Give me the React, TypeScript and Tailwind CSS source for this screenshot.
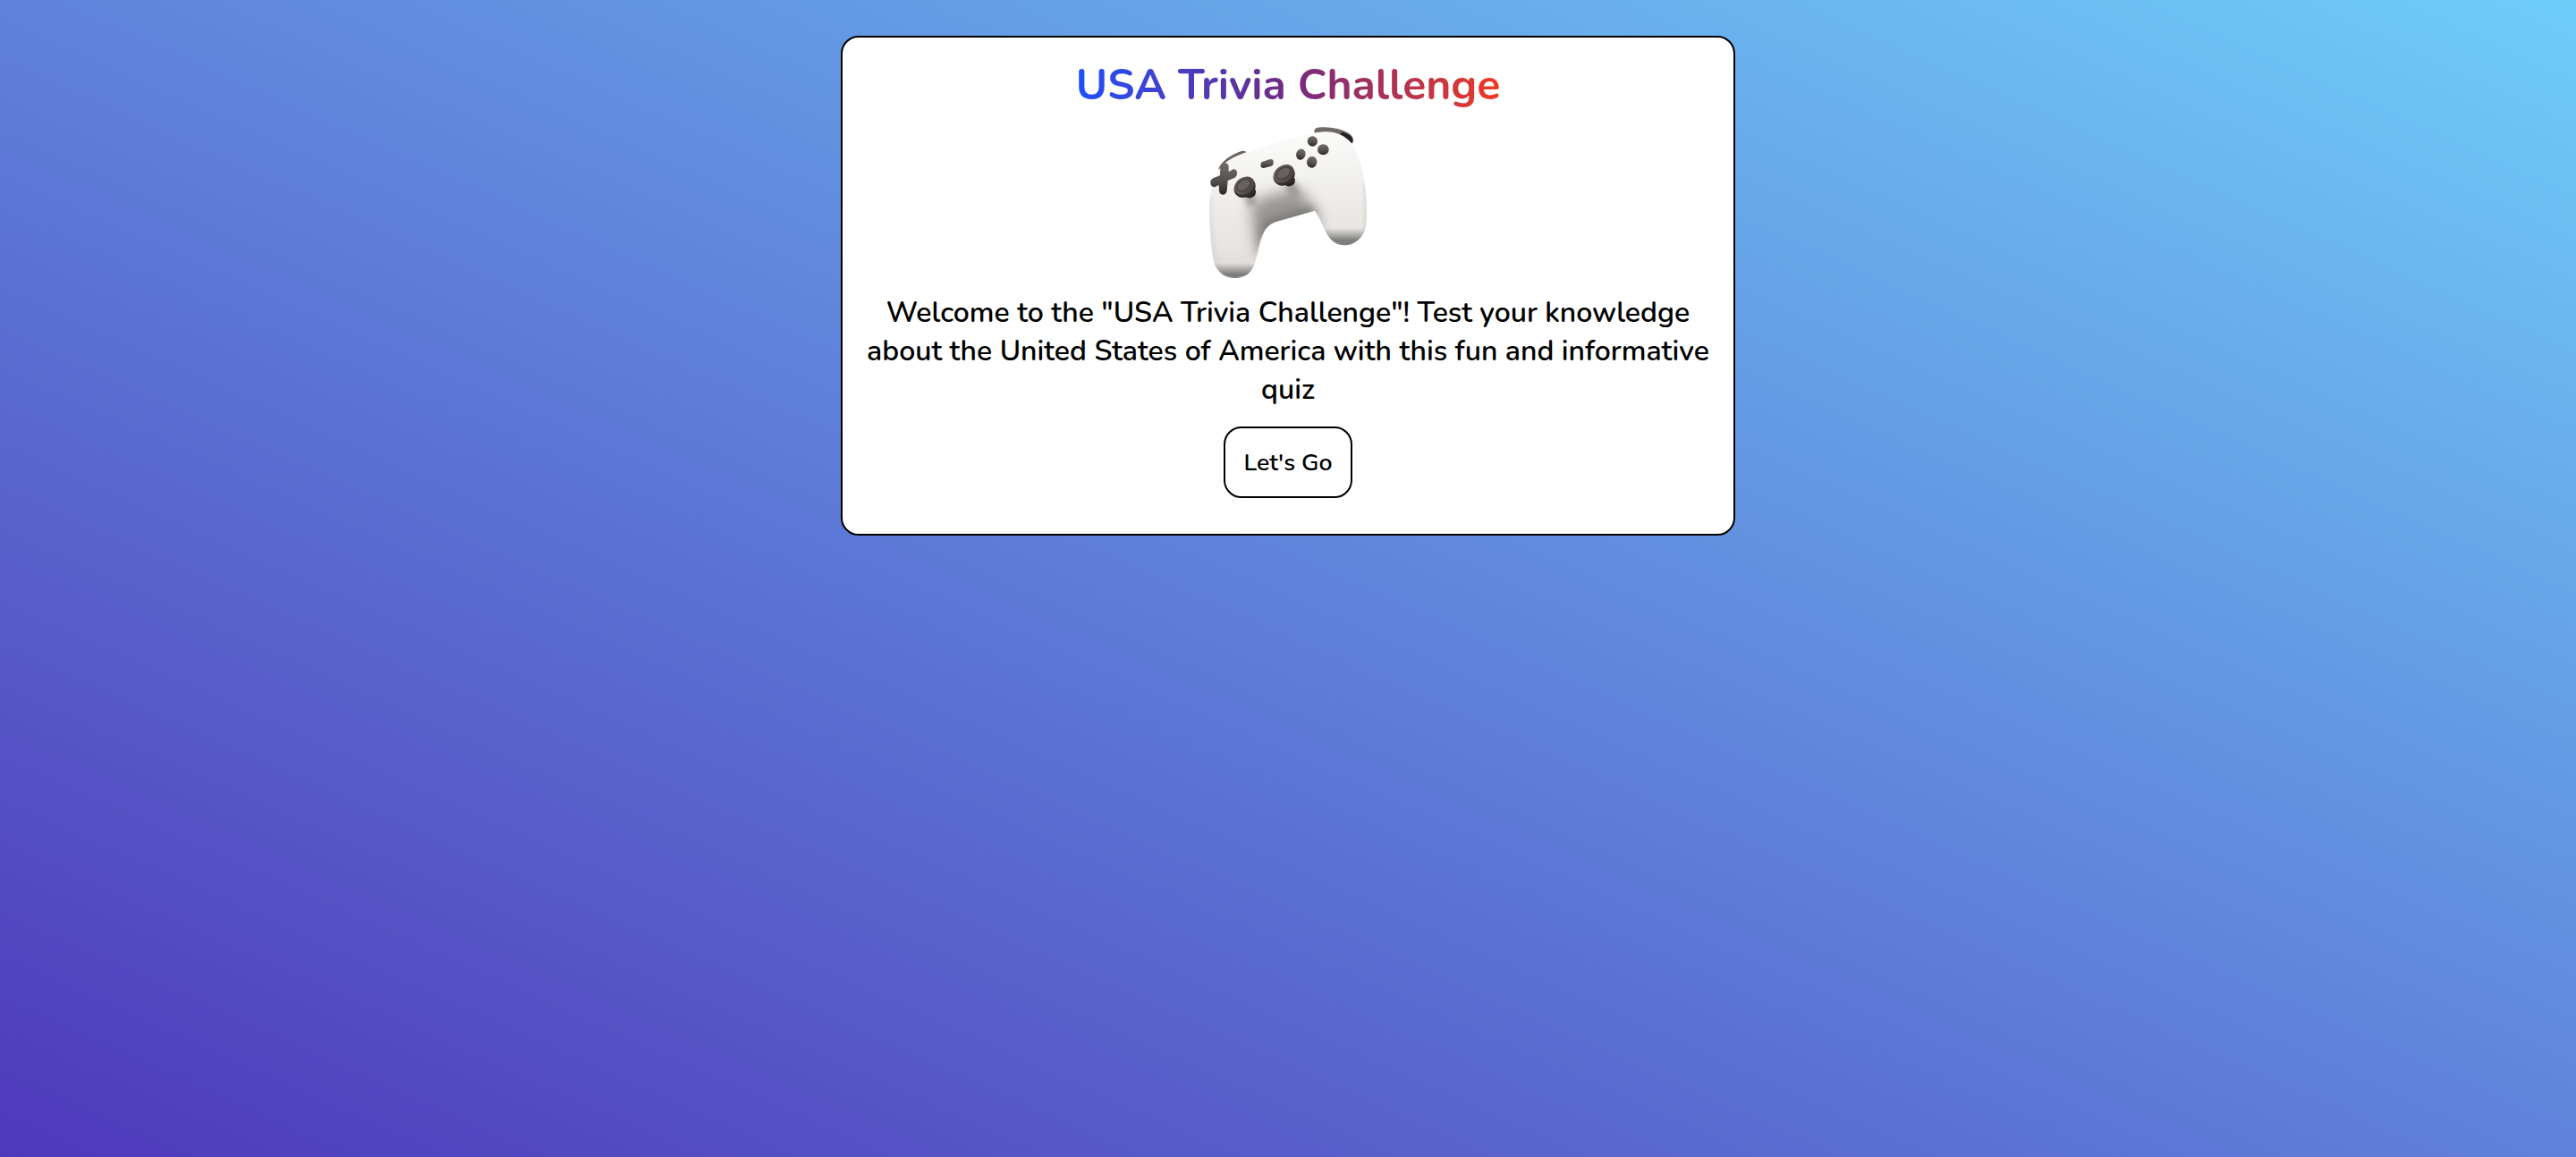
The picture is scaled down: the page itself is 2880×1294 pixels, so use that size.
function Controller() {
  return (
    <svg className="mt-0.5 h-[190px] w-[220px] shrink-0" viewBox="0 0 660 570" fill="none" role="img" aria-label="Game controller">
      <defs>
        <linearGradient id="shell" x1="300" y1="50" x2="340" y2="540" gradientUnits="userSpaceOnUse">
          <stop stopColor="#fcfcfb" />
          <stop offset="0.4" stopColor="#f0efed" />
          <stop offset="0.75" stopColor="#e7e4e1" />
          <stop offset="1" stopColor="#dcd8d5" />
        </linearGradient>
        <linearGradient id="key" x1="0" y1="0" x2="0" y2="1">
          <stop stopColor="#716b67" />
          <stop offset="0.55" stopColor="#57514e" />
          <stop offset="1" stopColor="#2c2826" />
        </linearGradient>
        <linearGradient id="cap" x1="0" y1="0" x2="1" y2="1">
          <stop stopColor="#6d6662" />
          <stop offset="1" stopColor="#46403d" />
        </linearGradient>
        <linearGradient id="leftTip" x1="0" y1="492" x2="0" y2="530" gradientUnits="userSpaceOnUse">
          <stop stopColor="#8a8987" stopOpacity="0" />
          <stop offset="1" stopColor="#7d7d7c" />
        </linearGradient>
        <linearGradient id="rightTip" x1="0" y1="375" x2="0" y2="415" gradientUnits="userSpaceOnUse">
          <stop stopColor="#8a8987" stopOpacity="0" />
          <stop offset="1" stopColor="#7f7f7e" />
        </linearGradient>
        <filter id="soft" x="-50%" y="-50%" width="200%" height="200%">
          <feGaussianBlur stdDeviation="24" />
        </filter>
        <filter id="near" x="-60%" y="-60%" width="220%" height="220%">
          <feGaussianBlur stdDeviation="10" />
        </filter>
        <filter id="fine" x="-10%" y="-10%" width="120%" height="120%">
          <feGaussianBlur stdDeviation="1.5" />
        </filter>
        <clipPath id="body">
          <path d="M67 300C67 262 72 245 84 224L100 178C120 150 150 135 190 121C265 96 340 72 418 56C460 46 505 52 535 82C568 120 582 180 590 245C595 290 596 335 592 365C584 410 552 434 517 433C484 430 468 412 452 378C441 352 432 333 420 317L292 353C266 360 251 380 243 402C229 440 229 472 214 505C202 530 182 543 150 543C116 541 95 522 84 497C70 450 66 360 67 300Z" />
        </clipPath>
      </defs>
      <g filter="url(#fine)">
        <path d="M96 180C104 150 145 125 178 116Q190 115 189 123C160 132 130 146 118 162Z" fill="#6b6460" />
        <path d="M419 56C416 43 423 38 440 37C485 35 522 46 541 63C549 72 549 80 546 91L520 85C490 62 455 52 419 56Z" fill="#716965" />
        <path d="M510 53C526 56 542 64 547 74Q549 82 546 91C535 82 522 74 502 67Z" fill="#292422" />
        <g clipPath="url(#body)">
          <rect x="50" y="30" width="570" height="530" fill="url(#shell)" />
          <path d="M205 300L240 275L330 250L375 250L430 330L420 400L225 440Z" fill="#8b8987" filter="url(#soft)" opacity="0.88" />
          <path d="M246 352L330 325L410 298L432 325L300 370L256 420L236 400Z" fill="#6d6c6a" filter="url(#near)" opacity="0.55" />
          <path d="M236 330Q222 390 216 480L244 420Z" fill="#96938f" filter="url(#near)" opacity="0.65" />
          <path d="M424 295Q440 350 474 420L440 410L410 310Z" fill="#c9c5c1" filter="url(#near)" opacity="0.6" />
          <path d="M178 262L218 258L224 295L198 305Z" fill="#7d7874" filter="url(#near)" opacity="0.6" />
          <path d="M316 226L354 218L372 260L340 270Z" fill="#7d7874" filter="url(#near)" opacity="0.6" />
          <path d="M64 270Q64 420 92 510" stroke="#c9c5c1" strokeWidth="7" filter="url(#near)" />
          <path d="M588 220Q602 320 586 390" stroke="#cec8c2" strokeWidth="9" filter="url(#near)" />
          <rect x="60" y="485" width="170" height="62" fill="url(#leftTip)" />
          <rect x="440" y="373" width="165" height="65" fill="url(#rightTip)" />
        </g>
        <path d="M103 168Q105 156 117 157Q130 157 131 169V187L146 178Q158 176 159 190Q159 203 150 207L128 216L125 251Q121 264 110 263Q99 261 99 249L98 231L84 238Q72 238 70 225Q68 213 80 207L102 199Z" fill="url(#key)" />
        <path d="M243 153L270 144Q279 143 281 150V159Q281 164 274 167L248 174Q241 174 239 169V160Q239 155 243 153Z" fill="url(#key)" />
        <g fill="url(#key)">
          <ellipse cx="412" cy="84" rx="17" ry="17" />
          <ellipse cx="448" cy="112" rx="19" ry="18" />
          <ellipse cx="373" cy="128" rx="15.500" ry="18.500" transform="rotate(18 373 128)" />
          <ellipse cx="410" cy="154" rx="17" ry="19" transform="rotate(10 410 154)" />
        </g>
        <path d="M182 266L218 232Q216 244 222 250Q224 264 213 271Q203 277 192 272Z" fill="#292422" />
        <ellipse cx="185" cy="239" rx="38" ry="32" transform="rotate(-35 185 239)" fill="#332e2b" />
        <ellipse cx="184" cy="233" rx="36" ry="28" transform="rotate(-35 184 233)" fill="url(#cap)" />
        <ellipse cx="181" cy="231" rx="25" ry="17" transform="rotate(-35 181 231)" fill="#68605c" stroke="#463f3c" strokeWidth="4" />
        <path d="M314 226L350 194Q348 206 353 211Q356 225 345 232Q335 238 324 233Z" fill="#292422" />
        <ellipse cx="317" cy="199" rx="38" ry="32" transform="rotate(-35 317 199)" fill="#332e2b" />
        <ellipse cx="316" cy="193" rx="37" ry="28" transform="rotate(-35 316 193)" fill="url(#cap)" />
        <ellipse cx="315" cy="191" rx="26" ry="17" transform="rotate(-35 315 191)" fill="#68605c" stroke="#463f3c" strokeWidth="4" />
      </g>
    </svg>
  );
}

export default function App() {
  return (
    <main className="flex h-[1294px] w-full items-start justify-center bg-[linear-gradient(to_top_right,#4f38bb,#6fccf9)] pt-10 font-['Nunito',sans-serif] text-black">
      <section className="flex h-[559px] w-[1000px] flex-col items-center rounded-[20px] border-2 border-black bg-white pt-5">
        <h1 className="bg-[linear-gradient(to_right,#1f50ff,#702c82,#f03824)] bg-clip-text text-5xl leading-[66px] font-bold whitespace-nowrap text-transparent">
          USA Trivia Challenge
        </h1>
        <Controller />
        <p className="mt-2 flex flex-col items-center text-[32px] leading-[43px] font-semibold whitespace-nowrap">
          <span>Welcome to the "USA Trivia Challenge"! Test your knowledge</span>
          <span>about the United States of America with this fun and informative</span>
          <span>quiz</span>
        </p>
        <button className="mt-5 h-20 w-36 rounded-[20px] border-2 border-black bg-white text-[26.667px] leading-9 font-semibold whitespace-nowrap">
          Let's Go
        </button>
      </section>
    </main>
  );
}
